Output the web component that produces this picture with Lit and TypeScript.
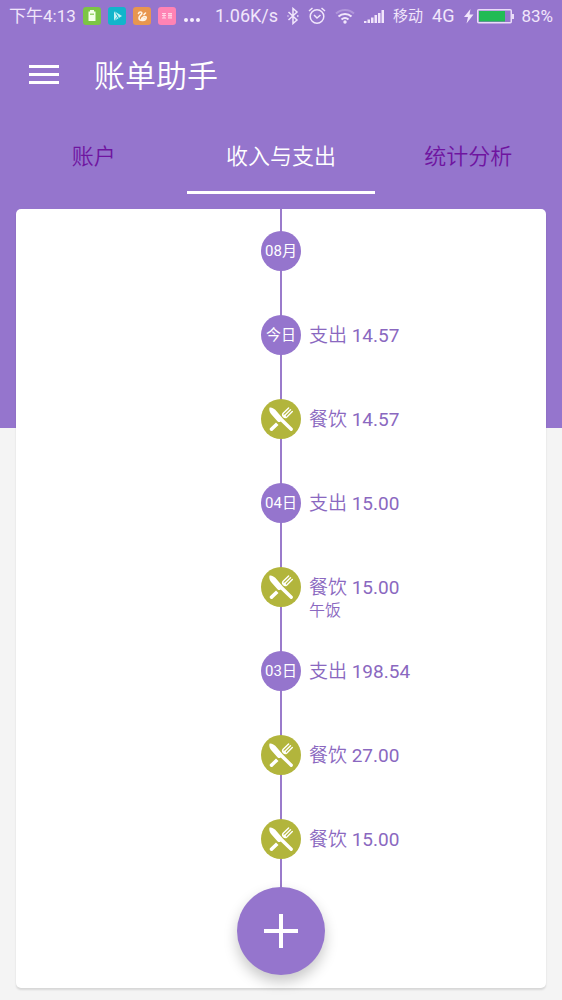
import { LitElement, html, svg, css, nothing } from "lit";
import { customElement, property, state } from "lit/decorators.js";
import { classMap } from "lit/directives/class-map.js";

interface Entry {
  badge?: string;
  label?: string;
  amount?: string;
  note?: string;
}

const ENTRIES: Entry[] = [
  { badge: "08月" },
  { badge: "今日", label: "支出", amount: "14.57" },
  { label: "餐饮", amount: "14.57" },
  { badge: "04日", label: "支出", amount: "15.00" },
  { label: "餐饮", amount: "15.00", note: "午饭" },
  { badge: "03日", label: "支出", amount: "198.54" },
  { label: "餐饮", amount: "27.00" },
  { label: "餐饮", amount: "15.00" },
];

const TABS = ["账户", "收入与支出", "统计分析"];

@customElement("status-bar")
export class StatusBar extends LitElement {
  static styles = css`
    :host {
      display: flex;
      align-items: center;
      justify-content: space-between;
      height: 32px;
      padding: 0 9px;
      color: #f1e6fb;
      font-size: 17px;
      line-height: 20px;
      white-space: nowrap;
    }
    .group {
      display: flex;
      align-items: center;
      gap: 7px;
    }
    .signals {
      gap: 9px;
    }
    .large {
      font-size: 18px;
    }
    .carrier {
      font-size: 15px;
    }
    .power {
      display: flex;
      align-items: center;
      gap: 3px;
    }
    .percent {
      padding-left: 4px;
    }
    svg {
      display: block;
      flex: none;
    }
  `;

  render() {
    return html`
      <div class="group">
        <span>下午4:13</span>
        <svg width="18" height="18" viewBox="0 0 18 18">
          <rect width="18" height="18" rx="3" fill="#7cc544" />
          <path d="M7 3h4v1.500h1.500V14h-7V4.500H7z" fill="#f4ffe9" />
          <path d="M7 6.500h4v1.500H7z" fill="#9bd36e" />
        </svg>
        <svg width="18" height="18" viewBox="0 0 18 18">
          <rect width="18" height="18" rx="3" fill="#12b5cb" />
          <path d="M6 4l8 5-8 5z" fill="#c9f4f4" />
          <path d="M6 4l4 5-4 5M8 7l3 4" fill="none" stroke="#12b5cb" stroke-width=".8" />
        </svg>
        <svg width="18" height="18" viewBox="0 0 18 18">
          <rect width="18" height="18" rx="3" fill="#e8964f" />
          <path
            d="M5.500 6.500C6 4.500 9 4.500 8.800 6.500 8.500 8 6 8.800 6 11c0 1.500 1.500 2.500 3.500 2.500 2.300 0 3.700-1.300 3.700-3.300-1.500-1.200-3-.7-3.700.8"
            fill="none"
            stroke="#fff3e4"
            stroke-width="1.600"
            stroke-linecap="round"
          />
          <path d="M8 10.500h4.500l-1 2.500H8z" fill="#fff3e4" />
          <path d="M11 7.500l1.500-1.500" stroke="#fff3e4" stroke-width="1.600" stroke-linecap="round" />
        </svg>
        <svg width="18" height="18" viewBox="0 0 18 18">
          <rect width="18" height="18" rx="3" fill="#ff83b4" />
          <path
            d="M4 6.500h4M4 8.500h4M4 11h4M6 6v5M10 6.500h4M10 8.500h4M10 11h4M11 6v5M13 6v5"
            stroke="#ffd3e4"
            fill="none"
          />
        </svg>
        <svg width="18" height="18" viewBox="0 0 18 18" fill="#f7effd">
          <circle cx="3" cy="13" r="2" />
          <circle cx="9" cy="13" r="2" />
          <circle cx="15" cy="13" r="2" />
        </svg>
      </div>
      <div class="group signals">
        <span class="large">1.06K/s</span>
        <svg width="12" height="18" viewBox="1 0 12 18" fill="none" stroke="currentColor" stroke-width="1.500">
          <path d="M2.500 5l8.500 8-4 3.500v-15L11 5l-8.500 8" />
          <path d="M1.500 9h1M11 9h1.500" />
        </svg>
        <svg width="18" height="18" viewBox="0 0 18 18" fill="none" stroke="currentColor" stroke-width="1.500">
          <circle cx="9" cy="9.500" r="6.800" />
          <path d="M6 8l3 3 3.500-3M1 4l3.500-3M17 4l-3.500-3" />
        </svg>
        <svg width="20" height="18" viewBox="1 0 20 18" fill="none" stroke="currentColor" stroke-width="2">
          <path d="M2 6.500a13 13 0 0 1 18 0" opacity=".3" />
          <path d="M4.500 9.500a9.500 9.500 0 0 1 13 0M7.500 12.500a5.500 5.500 0 0 1 7 0" />
          <circle cx="11" cy="15" r="1.700" fill="currentColor" stroke="none" />
        </svg>
        <svg width="20" height="18" viewBox="0 0 20 18" fill="currentColor">
          <path d="M0 14h2.500v2H0zM3.500 12.500H6V16H3.500zM7 10.500h2.500V16H7zM10.500 8H13v8h-2.500zM14 6h2.500v10H14zM17.500 3H20v13h-2.500z" />
        </svg>
        <span class="carrier">移动</span>
        <span class="large">4G</span>
        <span class="power">
          <svg width="11" height="18" viewBox="0 0 11 18" fill="currentColor">
            <path d="M7.500 2L1 10h4L3.500 16.500 10.500 7.500H6.500z" />
          </svg>
          <svg width="37" height="18" viewBox="0 0 37 18">
            <rect x=".75" y="2.750" width="33.500" height="13" rx="1" fill="none" stroke="#eadcf8" stroke-width="1.500" />
            <rect x="2" y="4" width="26" height="10.500" fill="#22bb55" />
            <path d="M35 7h2v5h-2z" fill="#eadcf8" />
          </svg>
          <span class="percent">83%</span>
        </span>
      </div>
    `;
  }
}

@customElement("timeline-entry")
export class TimelineEntry extends LitElement {
  @property({ attribute: false }) entry: Entry = {};

  static styles = css`
    :host {
      display: grid;
      grid-template-columns: 1fr 40px 1fr;
      align-items: center;
      column-gap: 8px;
      height: 84px;
    }
    .dot {
      grid-column: 2;
      display: grid;
      place-items: center;
      height: 40px;
      border-radius: 50%;
      background: #9575cd;
      color: #fff;
      font-size: 15px;
      line-height: 20px;
      white-space: nowrap;
    }
    .meal {
      background: #b2b53c;
    }
    .text {
      display: grid;
      align-content: center;
      grid-template-rows: 24px 24px 22px;
      color: #8a68c0;
      font-size: 19px;
      line-height: 24px;
      font-weight: 350;
    }
    .main {
      grid-row: 2;
    }
    .amount {
      font-weight: 400;
    }
    .note {
      grid-row: 3;
      font-size: 16px;
      line-height: 22px;
    }
  `;

  render() {
    const { badge, label, amount, note } = this.entry;
    return html`
      <div class=${classMap({ dot: true, meal: !badge })}>
        ${badge ??
        svg`<svg width="24" height="24" viewBox="0 0 24 24" fill="#fff">
          <path d="M.6.500C2.500.1 4.500 1 6.300 2.800l7.500 8.700 9.600 9.600a1.600 1.600 0 0 1-2.300 2.300l-9.400-9c-.9.900-2 .9-3 0L2.500 7.500C.5 5.300-.2 2.500.6.500z"/>
          <path d="M7 15.500l2.500 2.400-5.800 5.500a1.650 1.650 0 0 1-2.500-2.300z"/>
          <path d="M19.600.9l-5.400 5.400c-1 1.200-.7 2.400.3 3.400s2.300 1.200 3.400.2l5.400-5.300M21.500 2.700l-5.300 5.400" fill="none" stroke="#fff" stroke-width="1.400" stroke-linecap="round"/>
          <path d="M14.200 7.500l2.300.3.700 2.500-1.500.3-1.500-1.500z"/>
        </svg>`}
      </div>
      ${label
        ? html`<div class="text">
            <span class="main">${label} <span class="amount">${amount}</span></span>
            ${note ? html`<span class="note">${note}</span>` : nothing}
          </div>`
        : nothing}
    `;
  }
}

@customElement("app-root")
export class AppRoot extends LitElement {
  @state() private active = 1;

  static styles = css`
    :host {
      display: flex;
      flex-direction: column;
      box-sizing: border-box;
      min-height: 100vh;
      padding-bottom: 12px;
      background: linear-gradient(#9575cd 428px, #f4f4f4 428px);
      font-family: Roboto, "Noto Sans CJK SC", sans-serif;
      font-weight: 400;
    }
    button {
      border: 0;
      padding: 0;
      background: none;
      font: inherit;
      cursor: pointer;
    }
    svg {
      display: block;
    }
    .toolbar {
      display: flex;
      align-items: center;
      gap: 35px;
      height: 86px;
      padding: 0 29px;
    }
    h1 {
      margin: 0;
      padding-top: 4px;
      color: #fff;
      font-size: 31px;
      line-height: 40px;
      font-weight: 350;
    }
    .tabs {
      display: grid;
      grid-template-columns: repeat(3, 1fr);
      height: 76px;
    }
    .tab {
      padding-top: 4px;
      border-bottom: 3px solid transparent;
      color: #6f14a0;
      font-size: 22px;
      line-height: 28px;
      font-weight: 350;
    }
    .selected {
      border-color: #fff;
      color: #fff;
    }
    .card {
      position: relative;
      flex: 1;
      display: flex;
      margin: 15px 16px 0;
      border-radius: 5px;
      background: #fff;
      box-shadow: 0 2px 2px rgba(0, 0, 0, 0.12);
    }
    .timeline {
      flex: 1;
      margin: 0;
      padding: 0 0 107px;
      list-style: none;
      background: linear-gradient(#9a7bcb, #9a7bcb) top center / 2px calc(100% - 50px) no-repeat;
    }
    .add {
      position: absolute;
      bottom: 13px;
      left: calc(50% - 44px);
      display: grid;
      place-items: center;
      width: 88px;
      height: 88px;
      border-radius: 50%;
      background: #9575cd;
      box-shadow: 0 7px 14px rgba(0, 0, 0, 0.22);
    }
  `;

  render() {
    return html`
      <status-bar></status-bar>
      <header class="toolbar">
        <button aria-label="菜单">
          <svg width="30" height="22" viewBox="0 0 30 22" fill="#fff">
            <path d="M0 1h30v3H0zM0 9h30v3H0zM0 17h30v3H0z" />
          </svg>
        </button>
        <h1>账单助手</h1>
      </header>
      <nav class="tabs" role="tablist">
        ${TABS.map(
          (name, i) => html`<button
            role="tab"
            aria-selected=${i === this.active}
            class=${classMap({ tab: true, selected: i === this.active })}
            @click=${() => (this.active = i)}
          >
            ${name}
          </button>`
        )}
      </nav>
      <main class="card">
        <ul class="timeline">
          ${ENTRIES.map((entry) => html`<li><timeline-entry .entry=${entry}></timeline-entry></li>`)}
        </ul>
        <button class="add" aria-label="添加">
          <svg width="34" height="34" viewBox="0 0 34 34" fill="#fff">
            <path d="M15 0h4v15h15v4H19v15h-4V19H0v-4h15z" />
          </svg>
        </button>
      </main>
    `;
  }
}
